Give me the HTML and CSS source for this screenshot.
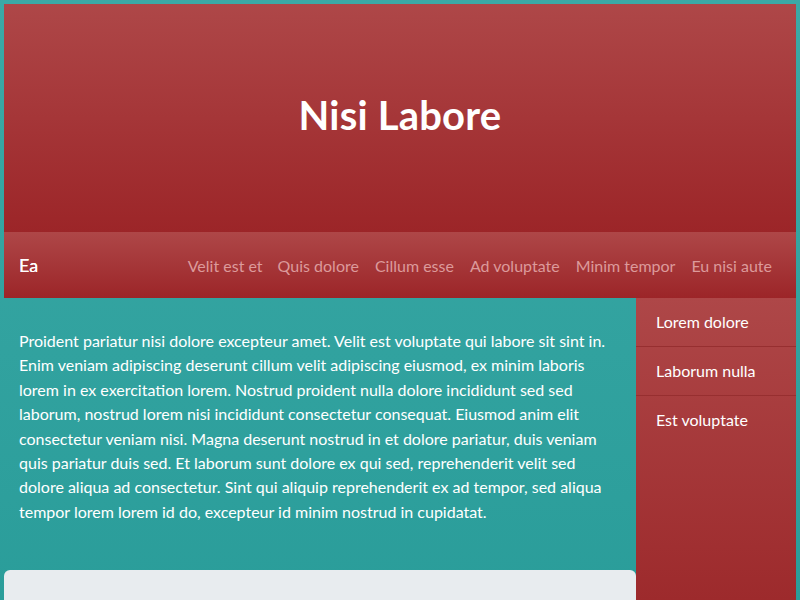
FILE: index.html
```html
<!DOCTYPE html>
<html>
<head>
<meta charset="utf-8">
<link rel="stylesheet" href="styles.css">
</head>
<body>
<div class="page">
  <header class="hero"><h1>Nisi Labore</h1></header>
  <nav class="nav">
    <span class="brand">Ea</span>
    <div class="links">
      <a>Velit est et</a>
      <a>Quis dolore</a>
      <a>Cillum esse</a>
      <a>Ad voluptate</a>
      <a>Minim tempor</a>
      <a>Eu nisi aute</a>
    </div>
  </nav>
  <div class="body">
    <main class="main">
      <p class="text">Proident pariatur nisi dolore excepteur amet. Velit est voluptate qui labore sit sint in. Enim veniam adipiscing deserunt cillum velit adipiscing eiusmod, ex minim laboris lorem in ex exercitation lorem. Nostrud proident nulla dolore incididunt sed sed laborum, nostrud lorem nisi incididunt consectetur consequat. Eiusmod anim elit consectetur veniam nisi. Magna deserunt nostrud in et dolore pariatur, duis veniam quis pariatur duis sed. Et laborum sunt dolore ex qui sed, reprehenderit velit sed dolore aliqua ad consectetur. Sint qui aliquip reprehenderit ex ad tempor, sed aliqua tempor lorem lorem id do, excepteur id minim nostrud in cupidatat.</p>
      <div class="card"></div>
    </main>
    <aside class="side">
      <a class="item">Lorem dolore</a>
      <a class="item">Laborum nulla</a>
      <a class="item">Est voluptate</a>
    </aside>
  </div>
</div>
</body>
</html>
```
FILE: styles.css
```css
html, body { margin: 0; padding: 0; }
body {
  font-family: Lato, "Open Sans", sans-serif;
  color: #fff;
  background: linear-gradient(#3ba9a6, #2a9d9a);
  padding: 4px;
  box-sizing: border-box;
  overflow: hidden;
  height: 600px;
}
.page { display: flex; flex-direction: column; height: 596px; }
.hero {
  height: 228px;
  display: flex;
  align-items: center;
  justify-content: center;
  background: linear-gradient(#ae4748, #9c2528);
}
.hero h1 { margin: 0 0 6px; font-size: 40px; font-weight: 700; letter-spacing: 0.2px; }
.nav {
  height: 66px;
  display: flex;
  align-items: center;
  justify-content: space-between;
  padding: 0 16px 0 15px;
  background: linear-gradient(#ae4748, #9c2528);
}
.brand { font-size: 18px; font-weight: 400; text-shadow: 0 0 0.4px #fff; }
.links { display: flex; padding-right: 0; }
.links a { padding: 0 8px; font-size: 16px; color: #dc9a9b; }
.links a:first-child { padding-left: 0; margin-right: -1px; }
.body { display: flex; flex: 1; min-height: 0; }
.main { flex: 1; display: flex; flex-direction: column; }
.text {
  margin: 0;
  padding: 31px 18px 46px 15px;
  font-size: 16px;
  line-height: 24.4px;
}
.card {
  flex: 1;
  background: #e8ecef;
  border-radius: 6px 6px 0 0;
}
.side {
  width: 160px;
  display: flex;
  flex-direction: column;
  background: linear-gradient(#ae4748, #9d2a2c);
}
.item {
  padding: 12px 20px;
  font-size: 16px;
  line-height: 24px;
  border-bottom: 1px solid #972f30;
}
.item:last-child { border-bottom: none; }
```
